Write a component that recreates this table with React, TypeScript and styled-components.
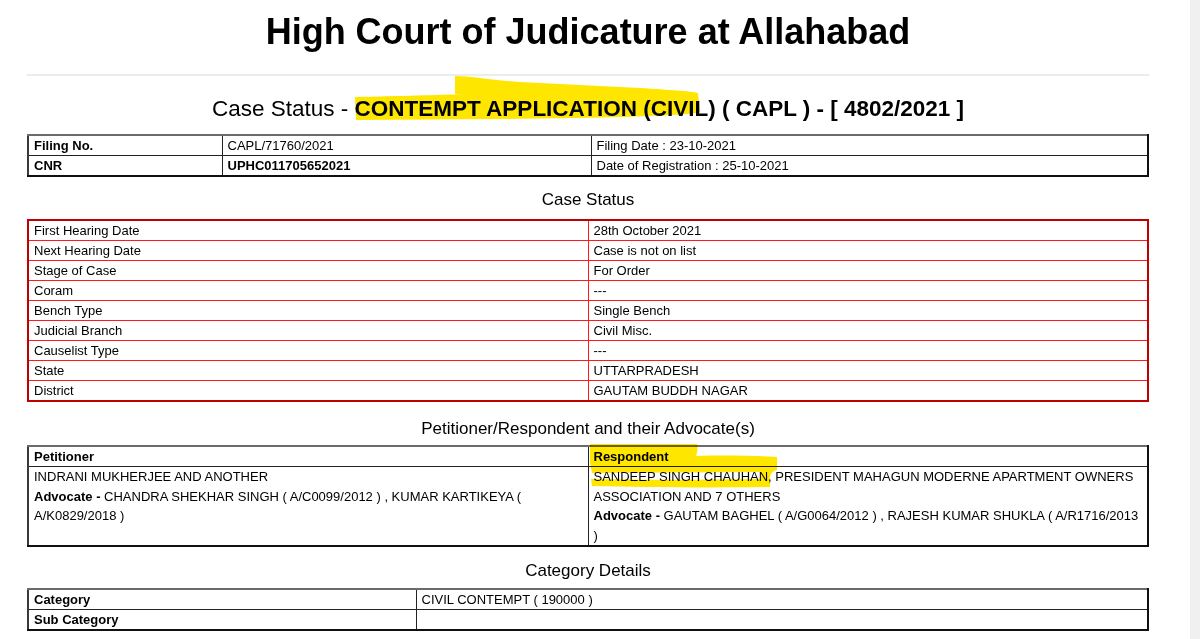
import styled, { createGlobalStyle } from "styled-components";

const GlobalStyle = createGlobalStyle`
  html, body {
    margin: 0;
    padding: 0;
    background: #ffffff;
    font-family: "Liberation Sans", Arial, sans-serif;
    color: #000;
  }
`;

const caseRows = [
  ["First Hearing Date", "28th October 2021"],
  ["Next Hearing Date", "Case is not on list"],
  ["Stage of Case", "For Order"],
  ["Coram", "---"],
  ["Bench Type", "Single Bench"],
  ["Judicial Branch", "Civil Misc."],
  ["Causelist Type", "---"],
  ["State", "UTTARPRADESH"],
  ["District", "GAUTAM BUDDH NAGAR"],
];

function Highlighter() {
  return (
    <Marks width="1200" height="639" viewBox="0 0 1200 639">
      {/* stroke over the case type */}
      <path
        d="M455 76 C470 76 490 80 520 82 C560 84 600 86 640 88 C670 90 690 91 698 93 L700 112 C690 116 600 118 500 119 L356 120 L355 97 C400 96 440 95 463 94 L455 94 Z"
        fill="#ffe600"
      />
      {/* respondent */}
      <path
        d="M590 444 L697 444 C698 449 697 453 696 456 C730 455 760 456 777 457 L777 470 C770 472 770 476 770 480 L770 487 C700 488 640 487 592 486 L591 479 C640 480 700 480 760 479 L760 472 L592 473 L590 462 Z"
        fill="#ffe600"
      />
    </Marks>
  );
}

function App() {
  return (
    <>
      <GlobalStyle />
      <Screen>
        <Page>
          <Title>High Court of Judicature at Allahabad</Title>
          <Rule />
          <CaseHeading>
            Case Status - <b>CONTEMPT APPLICATION (CIVIL) ( CAPL ) - [ 4802/2021 ]</b>
          </CaseHeading>

          <DarkTable>
            <colgroup>
              <col style={{ width: 194 }} />
              <col style={{ width: 369 }} />
              <col />
            </colgroup>
            <tbody>
              <tr>
                <Cell $bold>Filing No.</Cell>
                <Cell>CAPL/71760/2021</Cell>
                <Cell>Filing Date : 23-10-2021</Cell>
              </tr>
              <tr>
                <Cell $bold>CNR</Cell>
                <Cell $bold>UPHC011705652021</Cell>
                <Cell>Date of Registration : 25-10-2021</Cell>
              </tr>
            </tbody>
          </DarkTable>

          <SectionHeading $top={13}>Case Status</SectionHeading>
          <RedTable>
            <colgroup>
              <col style={{ width: "50%" }} />
              <col />
            </colgroup>
            <tbody>
              {caseRows.map(([label, value]) => (
                <tr key={label}>
                  <RedCell>{label}</RedCell>
                  <RedCell>{value}</RedCell>
                </tr>
              ))}
            </tbody>
          </RedTable>

          <SectionHeading $top={17}>Petitioner/Respondent and their Advocate(s)</SectionHeading>
          <DarkTable $top={6}>
            <colgroup>
              <col style={{ width: "50%" }} />
              <col />
            </colgroup>
            <tbody>
              <tr>
                <Cell $bold>Petitioner</Cell>
                <Cell $bold>Respondent</Cell>
              </tr>
              <tr>
                <PartyCell>
                  <Line>INDRANI MUKHERJEE AND ANOTHER</Line>
                  <Line>
                    <b>Advocate - </b>
                    <span>CHANDRA SHEKHAR SINGH ( A/C0099/2012 ) , KUMAR KARTIKEYA ( A/K0829/2018 )</span>
                  </Line>
                </PartyCell>
                <PartyCell>
                  <Line>
                    SANDEEP SINGH CHAUHAN, PRESIDENT MAHAGUN MODERNE APARTMENT OWNERS ASSOCIATION AND
                    7 OTHERS
                  </Line>
                  <Line>
                    <b>Advocate - </b>
                    <span>GAUTAM BAGHEL ( A/G0064/2012 ) , RAJESH KUMAR SHUKLA ( A/R1716/2013 )</span>
                  </Line>
                </PartyCell>
              </tr>
            </tbody>
          </DarkTable>

          <SectionHeading $top={14}>Category Details</SectionHeading>
          <DarkTable $top={7}>
            <colgroup>
              <col style={{ width: 388 }} />
              <col />
            </colgroup>
            <tbody>
              <tr>
                <Cell $bold>Category</Cell>
                <Cell>CIVIL CONTEMPT ( 190000 )</Cell>
              </tr>
              <tr>
                <Cell $bold>Sub Category</Cell>
                <Cell>&nbsp;</Cell>
              </tr>
            </tbody>
          </DarkTable>
        </Page>
        <ScrollTrack />
        <Highlighter />
      </Screen>
    </>
  );
}

const Screen = styled.div`
  position: relative;
  display: flex;
  width: 1200px;
  height: 639px;
  overflow: hidden;
`;

const Page = styled.div`
  flex: 1;
  padding: 0 41px 0 27px;
`;

const ScrollTrack = styled.div`
  width: 10px;
  background: #f0f0f0;
`;

const Marks = styled.svg`
  position: absolute;
  left: 0;
  top: 0;
  pointer-events: none;
  mix-blend-mode: multiply;
`;

const Title = styled.h1`
  margin: 0;
  padding-top: 11px;
  height: 42px;
  line-height: 42px;
  font-size: 36px;
  font-weight: 700;
  text-align: center;
`;

const Rule = styled.div`
  margin-top: 21px;
  height: 2px;
  background: #ececec;
`;

const CaseHeading = styled.h2`
  margin: 20px 0 0;
  height: 26px;
  line-height: 26px;
  font-size: 22.5px;
  font-weight: 400;
  text-align: center;

  b {
    font-weight: 700;
  }
`;

const SectionHeading = styled.h3<{ $top?: number }>`
  margin: ${(p) => p.$top ?? 14}px 0 0;
  height: 20px;
  line-height: 20px;
  font-size: 17px;
  font-weight: 400;
  text-align: center;
`;

const DarkTable = styled.table<{ $top?: number }>`
  width: 100%;
  margin-top: ${(p) => p.$top ?? 12}px;
  border-collapse: collapse;
  table-layout: fixed;
  border-top: 2px solid #6b6b6b;
  border-left: 2px solid #3a3a3a;
  border-right: 2px solid #111;
  border-bottom: 2px solid #111;
`;

const Cell = styled.td<{ $bold?: boolean }>`
  border: 1px solid #222;
  padding: 0 5px;
  height: 19px;
  line-height: 18px;
  font-size: 13px;
  font-weight: ${(p) => (p.$bold ? 700 : 400)};
  white-space: nowrap;
  overflow: hidden;
`;

const PartyCell = styled.td`
  border: 1px solid #222;
  padding: 0 5px;
  height: 77px;
  vertical-align: top;
  font-size: 13px;

  b {
    font-weight: 700;
  }
`;

const Line = styled.div`
  line-height: 19.6px;
`;

const RedTable = styled.table`
  width: 100%;
  margin-top: 9px;
  border-collapse: collapse;
  table-layout: fixed;
  border: 2px solid #c00000;
`;

const RedCell = styled.td`
  border: 1px solid #ff1a1a;
  padding: 0 5px;
  height: 19px;
  line-height: 17px;
  font-size: 13px;
`;

export default App;
